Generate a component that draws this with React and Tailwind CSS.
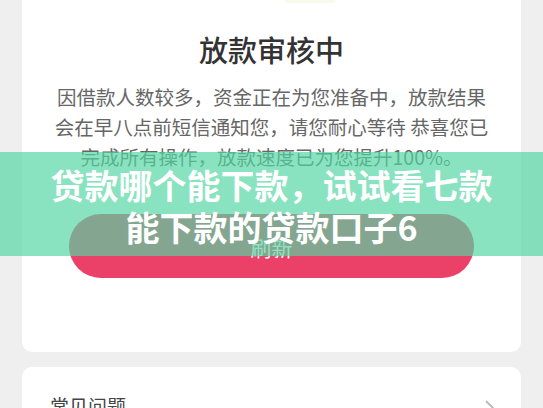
export default function App() {
  return (
    <div className="relative h-[408px] w-[543px] overflow-hidden bg-[#efefef] font-['Noto_Sans_CJK_SC',sans-serif]">
      <div className="px-[22px]">
        <div className="flex h-[352px] flex-col items-center rounded-b-[10px] bg-white">
          <div className="ml-[263px] h-[3px] w-[50px] self-start rounded-b-[3px] bg-[#fbf9ea]" />
          <div className="mt-[29px] text-[29px] leading-[35px] font-medium text-[#333]">放款审核中</div>
          <div className="mt-[15px] flex flex-col items-center text-[19.5px] leading-[30px] text-[#666]">
            <div>因借款人数较多，资金正在为您准备中，放款结果</div>
            <div>会在早八点前短信通知您，请您耐心等待 恭喜您已</div>
            <div>完成所有操作，放款速度已为您提升100%。</div>
          </div>
          <div className="mt-[42px] flex h-[64px] w-[405px] items-center justify-center rounded-full bg-[#eb4169] pt-[4px] text-[21px] text-white">
            刷新
          </div>
        </div>
        <div className="mt-[15px] flex h-[100px] items-start justify-between rounded-[10px] bg-white px-[28px] pt-[25px]">
          <div className="text-[19px] leading-[28px] text-[#444]">常见问题</div>
          <svg width="12" height="20" viewBox="0 0 12 20" className="mt-[7px] mr-[-3px]">
            <path d="M2 2 L10 10 L2 18" fill="none" stroke="#bbb" strokeWidth="2" />
          </svg>
        </div>
      </div>
      <div className="absolute left-0 right-0 top-[152px] flex h-[104px] flex-col items-center justify-center bg-[rgba(83,214,162,0.68)] pt-[4px] text-[34px] leading-[42px] font-bold text-white">
        <div>贷款哪个能下款，试试看七款</div>
        <div>能下款的贷款口子6</div>
      </div>
    </div>
  );
}
